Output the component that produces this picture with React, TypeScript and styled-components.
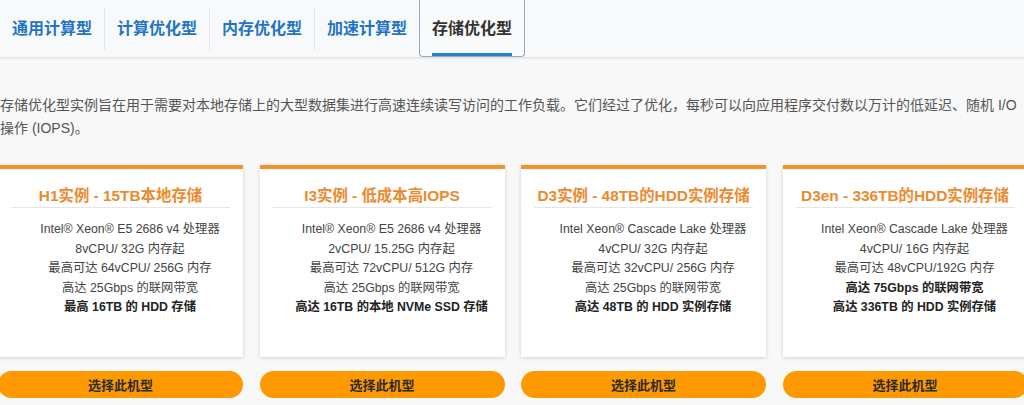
import React from "react";
import styled, { createGlobalStyle } from "styled-components";

const GlobalStyle = createGlobalStyle`
  html, body {
    margin: 0;
    padding: 0;
    background: #f8f8f8;
    font-family: "Liberation Sans", "Noto Sans CJK SC", Arial, sans-serif;
  }
  * { box-sizing: border-box; }
`;

const Page = styled.div`
  width: 1024px;
  height: 405px;
  overflow: hidden;
  background: #f8f8f8;
`;

const TabBar = styled.div`
  display: flex;
  height: 57px;
  background: #f8f9fa;
  box-shadow: 0 1px 3px rgba(0, 0, 0, 0.12);
  position: relative;
`;

const Tab = styled.div<{ $active?: boolean }>`
  padding: 15px 12px 0;
  font-family: "Noto Sans CJK SC", "Liberation Sans", sans-serif;
  font-size: 16px;
  font-weight: 700;
  color: ${(p) => (p.$active ? "#333" : "#1f74c4")};
  border: ${(p) => (p.$active ? "1px solid #93a9bf" : "none")};
  border-top: none;
  border-radius: 0 0 4px 4px;
  background: ${(p) => (p.$active ? "#f9fafb" : "transparent")};
`;

const TabLabel = styled.span<{ $active?: boolean }>`
  display: block;
  line-height: 24px;
  padding-bottom: 14px;
  white-space: nowrap;
  border-bottom: 3px solid ${(p) => (p.$active ? "#1f7fd0" : "transparent")};
`;

const Divider = styled.div`
  width: 1px;
  height: 42px;
  align-self: center;
  background: #e3e5e8;
`;

const Intro = styled.p`
  margin: 37px 0 0;
  width: 1024px;
  font-size: 14px;
  line-height: 23px;
  color: #555;
`;

const Grid = styled.div`
  display: grid;
  grid-template-columns: repeat(4, 245px);
  column-gap: 16.5px;
  margin: 25px 0 0 -2px;
`;

const Column = styled.div`
  display: flex;
  flex-direction: column;
  gap: 14px;
`;

const Card = styled.div`
  height: 192px;
  background: #fff;
  border-top: 4px solid #f5902a;
  box-shadow: 0 1px 4px rgba(0, 0, 0, 0.16);
  padding-top: 15px;
`;

const CardTitle = styled.h3`
  margin: 0 13px;
  padding-bottom: 0;
  border-bottom: 1px solid #e6e6e6;
  text-align: center;
  font-size: 15.4px;
  line-height: 23px;
  font-weight: 700;
  color: #ec8a2e;
  white-space: nowrap;
`;

const Specs = styled.ul`
  list-style: none;
  margin: 12px 0 0;
  padding: 0 0 0 19px;
  text-align: center;
`;

const Spec = styled.li<{ $bold?: boolean }>`
  font-size: 12.3px;
  line-height: 19.6px;
  white-space: nowrap;
  color: ${(p) => (p.$bold ? "#222" : "#444")};
  font-weight: ${(p) => (p.$bold ? 700 : 400)};
`;

const PickButton = styled.button`
  height: 27px;
  border: none;
  border-radius: 14px;
  background: #ff9900;
  color: #2a2a2a;
  font-family: "Noto Sans CJK SC", "Liberation Sans", sans-serif;
  font-size: 13px;
  font-weight: 700;
  cursor: pointer;
`;

type Line = { text: string; bold?: boolean };
type Instance = { title: string; lines: Line[] };

const tabs = ["通用计算型", "计算优化型", "内存优化型", "加速计算型", "存储优化型"];

const instances: Instance[] = [
  {
    title: "H1实例 - 15TB本地存储",
    lines: [
      { text: "Intel® Xeon® E5 2686 v4 处理器" },
      { text: "8vCPU/ 32G 内存起" },
      { text: "最高可达 64vCPU/ 256G 内存" },
      { text: "高达 25Gbps 的联网带宽" },
      { text: "最高 16TB 的 HDD 存储", bold: true },
    ],
  },
  {
    title: "I3实例 - 低成本高IOPS",
    lines: [
      { text: "Intel® Xeon® E5 2686 v4 处理器" },
      { text: "2vCPU/ 15.25G 内存起" },
      { text: "最高可达 72vCPU/ 512G 内存" },
      { text: "高达 25Gbps 的联网带宽" },
      { text: "高达 16TB 的本地 NVMe SSD 存储", bold: true },
    ],
  },
  {
    title: "D3实例 - 48TB的HDD实例存储",
    lines: [
      { text: "Intel Xeon® Cascade Lake 处理器" },
      { text: "4vCPU/ 32G 内存起" },
      { text: "最高可达 32vCPU/ 256G 内存" },
      { text: "高达 25Gbps 的联网带宽" },
      { text: "高达 48TB 的 HDD 实例存储", bold: true },
    ],
  },
  {
    title: "D3en - 336TB的HDD实例存储",
    lines: [
      { text: "Intel Xeon® Cascade Lake 处理器" },
      { text: "4vCPU/ 16G 内存起" },
      { text: "最高可达 48vCPU/192G 内存" },
      { text: "高达 75Gbps 的联网带宽", bold: true },
      { text: "高达 336TB 的 HDD 实例存储", bold: true },
    ],
  },
];

const App: React.FC = () => {
  const activeIndex = 4;
  return (
    <Page>
      <GlobalStyle />
      <TabBar>
        {tabs.map((t, i) => (
          <React.Fragment key={t}>
            <Tab $active={i === activeIndex}>
              <TabLabel $active={i === activeIndex}>{t}</TabLabel>
            </Tab>
            {i < activeIndex - 1 && <Divider />}
          </React.Fragment>
        ))}
      </TabBar>
      <Intro>
        存储优化型实例旨在用于需要对本地存储上的大型数据集进行高速连续读写访问的工作负载。它们经过了优化，每秒可以向应用程序交付数以万计的低延迟、随机 I/O 操作 (IOPS)。
      </Intro>
      <Grid>
        {instances.map((inst) => (
          <Column key={inst.title}>
            <Card>
              <CardTitle>{inst.title}</CardTitle>
              <Specs>
                {inst.lines.map((l) => (
                  <Spec key={l.text} $bold={l.bold}>
                    {l.text}
                  </Spec>
                ))}
              </Specs>
            </Card>
            <PickButton>选择此机型</PickButton>
          </Column>
        ))}
      </Grid>
    </Page>
  );
};

export default App;
